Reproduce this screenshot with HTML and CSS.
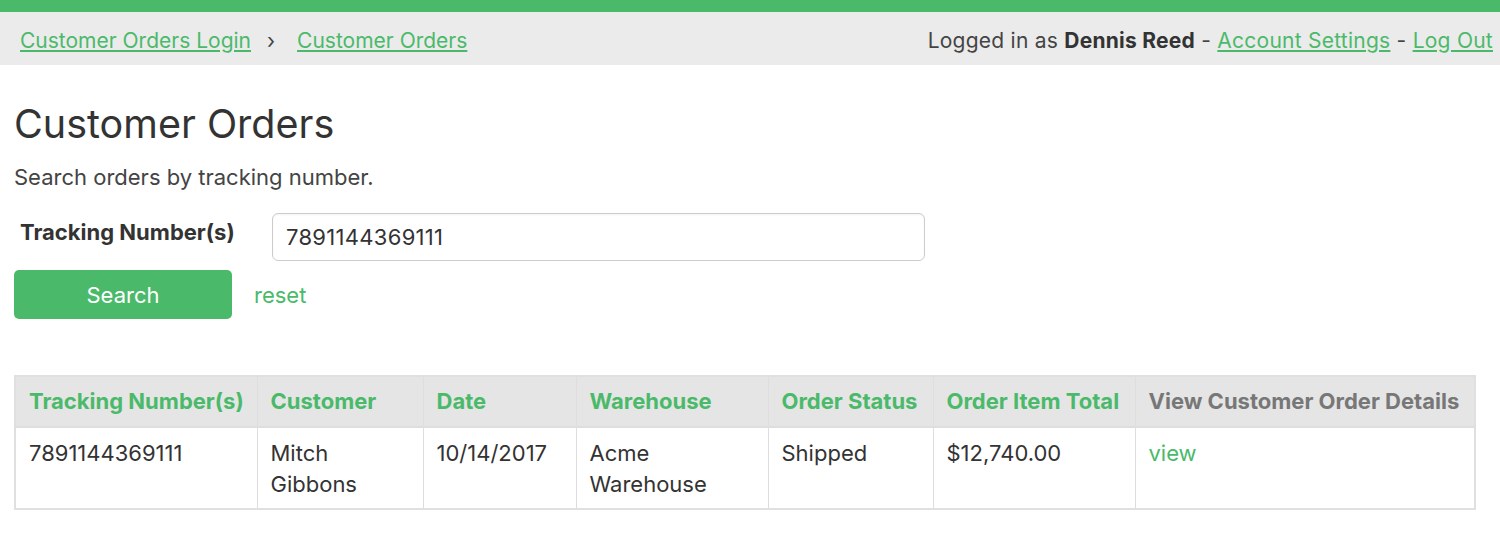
FILE: index.html
```html
<!DOCTYPE html>
<html lang="en">
<head>
<meta charset="utf-8">
<title>Customer Orders</title>
<link rel="stylesheet" href="styles.css">
</head>
<body>
<div class="topbar"></div>
<header class="subbar">
  <nav class="crumbs">
    <a href="#">Customer Orders Login</a>
    <span class="sep">›</span>
    <a href="#">Customer Orders</a>
  </nav>
  <div class="user">
    Logged in as <strong>Dennis Reed</strong> - <a href="#">Account Settings</a> - <a href="#">Log Out</a>
  </div>
</header>
<main class="content">
  <h1>Customer Orders</h1>
  <p class="intro">Search orders by tracking number.</p>
  <form class="search">
    <div class="field">
      <label for="tn">Tracking Number(s)</label>
      <input id="tn" type="text" value="7891144369111">
    </div>
    <div class="actions">
      <button type="button" class="btn">Search</button>
      <a href="#" class="reset">reset</a>
    </div>
  </form>
  <table class="orders">
    <colgroup>
      <col class="c1"><col class="c2"><col class="c3"><col class="c4"><col class="c5"><col class="c6"><col class="c7">
    </colgroup>
    <thead>
      <tr>
        <th class="sort">Tracking Number(s)</th>
        <th class="sort">Customer</th>
        <th class="sort">Date</th>
        <th class="sort">Warehouse</th>
        <th class="sort">Order Status</th>
        <th class="sort">Order Item Total</th>
        <th>View Customer Order Details</th>
      </tr>
    </thead>
    <tbody>
      <tr>
        <td>7891144369111</td>
        <td>Mitch Gibbons</td>
        <td>10/14/2017</td>
        <td>Acme Warehouse</td>
        <td>Shipped</td>
        <td>$12,740.00</td>
        <td><a href="#" class="view">view</a></td>
      </tr>
    </tbody>
  </table>
</main>
</body>
</html>
```
FILE: styles.css
```css
* { box-sizing: border-box; }
html, body { margin: 0; padding: 0; background: #fff; }
body {
  font-family: Inter, "Noto Sans", "Liberation Sans", sans-serif;
  color: #333;
  font-size: 22px;
}
a { color: #4aba6a; }
.topbar { height: 12px; background: #4aba6a; }
.subbar {
  height: 53px;
  background: #ebebeb;
  display: flex;
  align-items: center;
  justify-content: space-between;
  padding: 4px 7px 0 20px;
  font-size: 21px;
}
.crumbs { display: flex; align-items: center; }
.crumbs .sep { color: #444; margin: 0 22px 0 16px; }
.user { color: #444; letter-spacing: 0.25px; }
.user strong { color: #333; font-weight: 700; }
.content { padding: 0 14px; }
h1 {
  font-size: 39.5px;
  font-weight: 400;
  margin: 36px 0 0;
  line-height: 46px;
  color: #333;
}
.intro { margin: 16px 0 0; line-height: 28px; color: #444; }
.search { margin-top: 22px; }
.field { display: flex; align-items: center; }
.field label {
  font-weight: 700;
  width: 258px;
  padding-left: 6px;
  color: #333;
  position: relative;
  top: -5px;
}
.field input {
  width: 653px;
  height: 48px;
  border: 1px solid #ccc;
  border-radius: 6px;
  font: inherit;
  letter-spacing: 0.3px;
  color: #333;
  padding: 0 13px;
  box-shadow: inset 0 1px 2px rgba(0,0,0,0.05);
}
.actions { display: flex; align-items: center; margin-top: 9px; gap: 22px; }
.btn {
  width: 218px;
  height: 49px;
  border: none;
  border-radius: 5px;
  background: #4aba6a;
  color: #fff;
  font: inherit;
  cursor: pointer;
}
.reset { text-decoration: none; }
.orders {
  margin-top: 56px;
  width: 1460px;
  border-collapse: collapse;
  table-layout: fixed;
  border: 2px solid #e0e0e0;
}
.c1 { width: 242px; }
.c2 { width: 166px; }
.c3 { width: 153px; }
.c4 { width: 192px; }
.c5 { width: 165px; }
.c6 { width: 202px; }
.c7 { width: 340px; }
.orders th, .orders td {
  border: 1px solid #dedede;
  text-align: left;
  vertical-align: top;
  line-height: 31px;
}
.orders thead th {
  background: #e5e5e5;
  font-weight: 700;
  color: #777;
  padding: 9px 13px 9px;
  border-bottom: 2px solid #dedede;
  white-space: nowrap;
}
.orders th.sort { color: #4aba6a; }
.orders td { padding: 10px 13px 8px; height: 82px; color: #333; }
.view { text-decoration: none; }
```
